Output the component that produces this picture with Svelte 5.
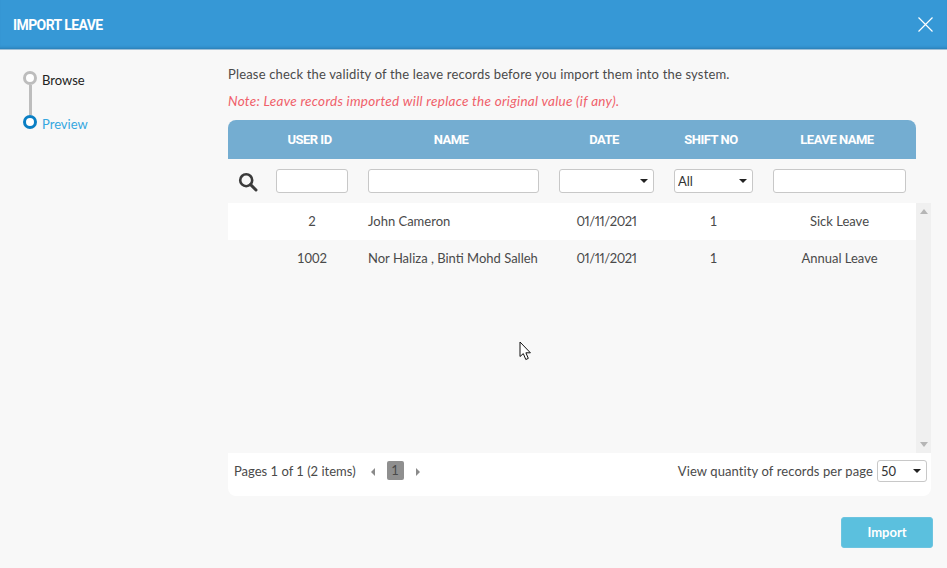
<script lang="ts">
	const rows = [
		{ id: '2', name: 'John Cameron', date: '01/11/2021', shift: '1', leave: 'Sick Leave' },
		{ id: '1002', name: 'Nor Haliza , Binti Mohd Salleh', date: '01/11/2021', shift: '1', leave: 'Annual Leave' }
	];
</script>

<div class="dialog">
	<header class="titlebar">
		<h1>IMPORT LEAVE</h1>
		<button class="close" aria-label="Close">
			<svg width="15" height="15" viewBox="0 0 15 15"><path d="M0.5 0.5 14.5 14.5M14.5 0.5 0.5 14.5" stroke="#fff" stroke-width="1.2" fill="none" /></svg>
		</button>
	</header>

	<div class="content">
		<nav class="steps">
			<div class="step">
				<span class="dot"></span>
				<span class="step-label">Browse</span>
			</div>
			<div class="connector"></div>
			<div class="step current">
				<span class="dot"></span>
				<span class="step-label">Preview</span>
			</div>
		</nav>

		<main class="main">
			<p class="intro">Please check the validity of the leave records before you import them into the system.</p>
			<p class="note">Note: Leave records imported will replace the original value (if any).</p>

			<div class="table-head cols">
				<span></span>
				<span>USER ID</span>
				<span>NAME</span>
				<span>DATE</span>
				<span>SHIFT NO</span>
				<span>LEAVE NAME</span>
			</div>

			<div class="filters cols">
				<svg class="search" width="20" height="20" viewBox="0 0 20 20">
					<circle cx="8.2" cy="8.2" r="6" fill="none" stroke="#3b3b3b" stroke-width="2.6" />
					<path d="M12.6 12.6 18 18" stroke="#3b3b3b" stroke-width="3" stroke-linecap="round" />
				</svg>
				<input type="text" />
				<input type="text" />
				<div class="select-wrap"><select></select></div>
				<div class="select-wrap"><select><option>All</option></select></div>
				<input type="text" />
			</div>

			<div class="scroll">
				<div class="rows">
					{#each rows as row, i}
						<div class="row cols" class:odd={i % 2 === 0}>
							<span></span>
							<span class="center">{row.id}</span>
							<span>{row.name}</span>
							<span class="center date">{row.date}</span>
							<span class="center">{row.shift}</span>
							<span class="center">{row.leave}</span>
						</div>
					{/each}
				</div>
				<div class="scrollbar">
					<span class="arrow up"></span>
					<span class="arrow down"></span>
				</div>
			</div>

			<div class="pager">
				<div class="pager-left">
					<span>Pages 1 of 1 (2 items)</span>
					<span class="tri prev"></span>
					<span class="page">1</span>
					<span class="tri next"></span>
				</div>
				<div class="pager-right">
					<span class="per-page">View quantity of records per page</span>
					<div class="select-wrap small"><select><option>50</option></select></div>
				</div>
			</div>

			<div class="actions">
				<button class="import">Import</button>
			</div>
		</main>
	</div>

	<svg class="cursor" width="13" height="20" viewBox="0 0 13 20">
		<path d="M1 1V15.5L4.3 12.6 6.8 18.5 9.3 17.4 6.9 11.8H11.4Z" fill="#fff" stroke="#111" stroke-width="1" />
	</svg>
</div>

<style>
	:global(body) {
		margin: 0;
	}
	.dialog {
		position: relative;
		width: 947px;
		height: 568px;
		overflow: hidden;
		background: #f8f8f8;
		font-family: 'Lato', 'Noto Sans', sans-serif;
		font-size: 13px;
		color: #4a4a4a;
	}
	.titlebar {
		display: flex;
		align-items: center;
		justify-content: space-between;
		height: 50px;
		padding: 0 14px 0 13px;
		box-sizing: border-box;
		background: #3698d6;
		border-bottom: 1px solid #9fbfd6;
		box-shadow: inset 0 -3px 3px -2px rgba(20, 70, 110, 0.35);
	}
	h1 {
		margin: 0;
		font-family: 'Roboto', sans-serif;
		font-size: 14px;
		font-weight: 700;
		letter-spacing: -0.6px;
		color: #fff;
	}
	.close {
		display: flex;
		padding: 0;
		border: 0;
		background: none;
	}
	.content {
		display: flex;
	}
	.steps {
		width: 228px;
		flex: none;
		box-sizing: border-box;
		padding: 21px 0 0 23px;
	}
	.step {
		display: flex;
		align-items: center;
		gap: 5px;
		height: 14px;
		color: #222;
	}
	.step-label {
		padding-top: 4px;
	}
	.dot {
		width: 14px;
		height: 14px;
		box-sizing: border-box;
		border: 3px solid #bdbdbd;
		border-radius: 50%;
		background: #fff;
	}
	.connector {
		width: 3px;
		height: 30px;
		margin-left: 5.5px;
		background: #bdbdbd;
	}
	.step.current {
		color: #35a7e0;
	}
	.step.current .dot {
		border-color: #0a7fc4;
	}
	.main {
		flex: 1;
		min-width: 0;
		padding-right: 16px;
	}
	p {
		margin: 0;
	}
	.intro {
		padding-top: 16px;
		line-height: 16px;
		letter-spacing: 0.17px;
	}
	.note {
		margin-top: 11px;
		line-height: 16px;
		font-size: 13.5px;
		font-style: italic;
		letter-spacing: 0.28px;
		color: #f0606a;
	}
	.cols {
		display: grid;
		grid-template-columns: 28px 72px 171px 95px 79px 133px;
		column-gap: 20px;
		align-items: center;
		padding-right: 10px;
	}
	.table-head {
		height: 39px;
		margin-top: 11px;
		margin-right: 15px;
		border-radius: 8px 8px 0 0;
		background: #74add1;
		font-family: 'Roboto', sans-serif;
		font-size: 13px;
		font-weight: 700;
		letter-spacing: -0.5px;
		color: #fff;
		text-align: center;
	}
	.table-head span {
		padding-right: 5px;
	}
	.filters {
		height: 44px;
		margin-right: 15px;
	}
	.search {
		margin-left: 10px;
		margin-top: 1px;
	}
	input,
	select {
		width: 100%;
		height: 24px;
		box-sizing: border-box;
		margin: 0;
		border: 1px solid #c8c8c8;
		border-radius: 3px;
		background: #fff;
		font: inherit;
		color: #333;
	}
	select {
		appearance: none;
		padding: 0 0 0 3px;
	}
	.select-wrap {
		position: relative;
	}
	.select-wrap::after {
		content: '';
		position: absolute;
		right: 6px;
		top: 10px;
		border-top: 4px solid #222;
		border-left: 4px solid transparent;
		border-right: 4px solid transparent;
	}
	.select-wrap.small {
		width: 50px;
	}
	.select-wrap.small select {
		height: 22px;
		padding-left: 3px;
	}
	.select-wrap.small::after {
		top: 9px;
	}
	.scroll {
		display: flex;
		height: 250px;
	}
	.rows {
		flex: 1;
	}
	.row {
		height: 37px;
		box-sizing: border-box;
		padding-bottom: 2px;
	}
	.row.odd {
		background: #fff;
	}
	.center {
		text-align: center;
	}
	.date {
		font-variant-numeric: proportional-nums;
		letter-spacing: -0.4px;
	}
	.scrollbar {
		display: flex;
		flex-direction: column;
		justify-content: space-between;
		align-items: center;
		width: 15px;
		flex: none;
		padding: 6px 0;
		box-sizing: border-box;
		background: #f0f0f0;
	}
	.arrow {
		border-left: 4px solid transparent;
		border-right: 4px solid transparent;
	}
	.arrow.up {
		border-bottom: 5px solid #b5b5b5;
	}
	.arrow.down {
		border-top: 5px solid #b5b5b5;
	}
	.pager {
		display: flex;
		justify-content: space-between;
		align-items: center;
		height: 43px;
		box-sizing: border-box;
		padding: 0 4px 8px 6px;
		border-radius: 0 0 8px 8px;
		background: #fff;
	}
	.pager-left,
	.pager-right {
		display: flex;
		align-items: center;
	}
	.pager-right {
		gap: 4px;
	}
	.per-page {
		letter-spacing: 0.1px;
	}
	.tri {
		border-top: 4px solid transparent;
		border-bottom: 4px solid transparent;
		margin-top: 2px;
	}
	.tri.prev {
		margin-left: 15px;
		border-right: 4px solid #8a8a8a;
	}
	.tri.next {
		border-left: 4px solid #8a8a8a;
	}
	.page {
		width: 17px;
		height: 19px;
		margin: 0 12px;
		border-radius: 2px;
		background: #8f8f8f;
		line-height: 19px;
		text-align: center;
	}
	.actions {
		display: flex;
		justify-content: flex-end;
		margin: 21px -2px 0 0;
	}
	.import {
		width: 92px;
		height: 31px;
		padding: 0 0 2px;
		border: 1px solid #6cc4e0;
		border-radius: 3px;
		background: #5bc0de;
		font-family: inherit;
		font-size: 13px;
		font-weight: 700;
		color: #fff;
	}
	.cursor {
		position: absolute;
		left: 519px;
		top: 341px;
	}
</style>
